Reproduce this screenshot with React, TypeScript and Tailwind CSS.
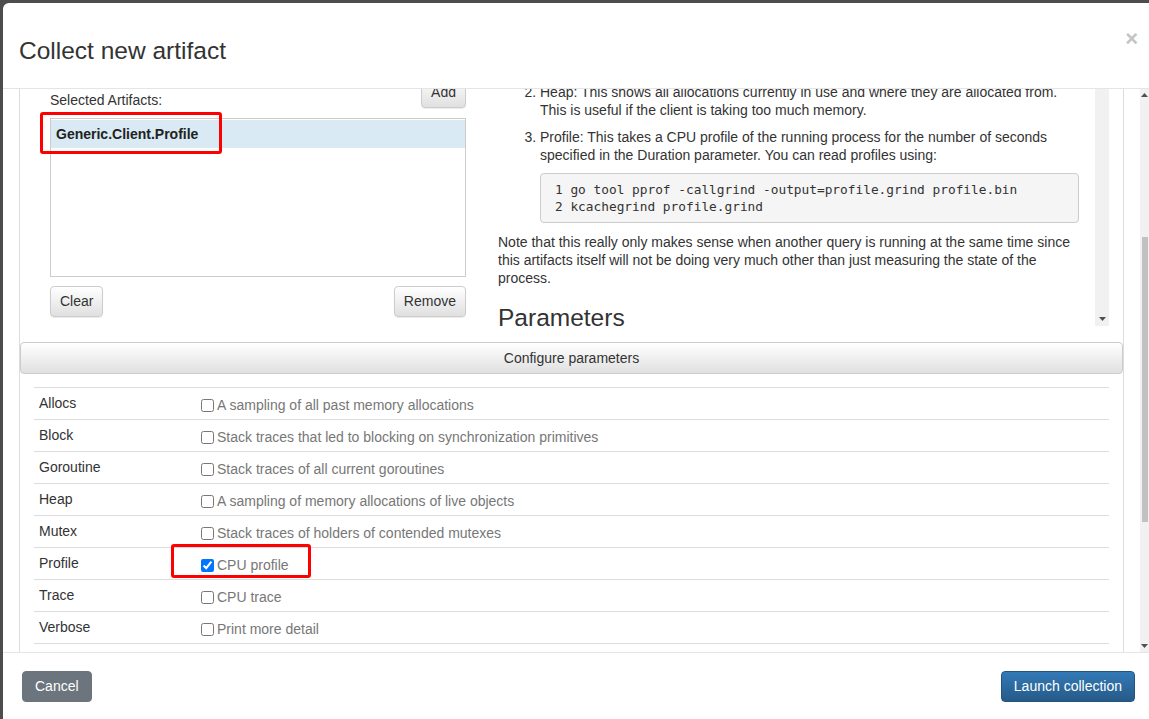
import React from "react";

type Param = { name: string; desc: string; checked?: boolean };

const params: Param[] = [
  { name: "Allocs", desc: "A sampling of all past memory allocations" },
  { name: "Block", desc: "Stack traces that led to blocking on synchronization primitives" },
  { name: "Goroutine", desc: "Stack traces of all current goroutines" },
  { name: "Heap", desc: "A sampling of memory allocations of live objects" },
  { name: "Mutex", desc: "Stack traces of holders of contended mutexes" },
  { name: "Profile", desc: "CPU profile", checked: true },
  { name: "Trace", desc: "CPU trace" },
  { name: "Verbose", desc: "Print more detail" },
];

const Arrow = ({ up }: { up?: boolean }) => (
  <svg width="7" height="4" viewBox="0 0 7 4">
    <polygon points={up ? "0,4 7,4 3.5,0" : "0,0 7,0 3.5,4"} fill="#505050" />
  </svg>
);

const GreyButton = ({ label }: { label: string }) => (
  <button className="h-[31px] px-[9px] text-[14px] text-[#333] border border-[#ccc] rounded-[4px] bg-linear-to-b from-white to-[#e0e0e0] shadow-[0_1px_1px_rgba(0,0,0,0.075)]">
    {label}
  </button>
);

const Description: React.FC = () => (
  <div className="flex-1 overflow-hidden pt-[13px] pr-[15px] leading-[18px]">
    <ol start={2} className="list-decimal pl-[42px]">
      <li>
        Heap: This shows all allocations currently in use and where they are allocated from.
        This is useful if the client is taking too much memory.
      </li>
      <li className="mt-[9px]">
        Profile: This takes a CPU profile of the running process for the number of seconds
        specified in the Duration parameter. You can read profiles using:
        <div className="mt-[9px] mr-[1px] border border-[#ccc] rounded-[4px] bg-[#f5f5f5] py-[7px] pl-[14px] font-['DejaVu_Sans_Mono',monospace] text-[12.8px] leading-[17px] text-[#333] whitespace-pre">
          <div>1 go tool pprof -callgrind -output=profile.grind profile.bin</div>
          <div>2 kcachegrind profile.grind</div>
        </div>
      </li>
    </ol>
    <p className="mt-[10px]">
      Note that this really only makes sense when another query is running at the same time since
      this artifacts itself will not be doing very much other than just measuring the state of the
      process.
    </p>
    <h3 className="mt-[18px] text-[24.5px] leading-[26px] text-[#333]">Parameters</h3>
  </div>
);

export default function App() {
  return (
    <div className="relative w-[1149px] h-[719px] overflow-hidden bg-[#4d4d4d] pt-[3px] pl-[3px] font-['Liberation_Sans',Arial,sans-serif] text-[14px] text-[#333]">
      <div className="flex flex-col w-[1146px] h-[716px] bg-white rounded-tl-[6px]">
        {/* header */}
        <div className="flex justify-between h-[86px] border-b border-[#e5e5e5] shrink-0">
          <h4 className="pl-[16px] pt-[34px] text-[24.5px] leading-[28px] text-[#333]">
            Collect new artifact
          </h4>
          <span className="mt-[25px] mr-[11px] text-[22px] leading-[22px] font-bold text-[#c4c4c4]">
            ×
          </span>
        </div>

        {/* body */}
        <div className="flex h-[563px] shrink-0 overflow-hidden">
          <div className="flex-1 overflow-hidden">
            <div className="-mt-[19px] ml-[16px] w-[1105px] border-x border-[#ddd] pb-[30px]">
              <div className="flex pl-[30px] pr-[14px]">
                <div className="w-[416px] pt-[7px]">
                  <div className="flex justify-between items-start">
                    <span className="mt-[13px] leading-[20px]">Selected Artifacts:</span>
                    <GreyButton label="Add" />
                  </div>
                  <div className="mt-[8px] h-[159px] border border-[#ccc] pt-[1px]">
                    <div className="h-[28px] bg-[#d9eaf4] pl-[5px] font-bold leading-[28px] text-[#222]">
                      Generic.Client.Profile
                    </div>
                  </div>
                  <div className="flex justify-between mt-[9px]">
                    <GreyButton label="Clear" />
                    <GreyButton label="Remove" />
                  </div>
                </div>
                <div className="ml-[32px] w-[611px] h-[256px] flex">
                  <Description />
                  <div className="w-[14px] bg-[#f1f1f1] flex flex-col justify-end items-center pb-[5px]">
                    <Arrow />
                  </div>
                </div>
              </div>

              <div className="mt-[16px] h-[32px] border border-[#ccc] rounded-[4px] bg-linear-to-b from-white to-[#e0e0e0] flex items-center justify-center">
                Configure parameters
              </div>

              <div className="mt-[13px] mx-[14px] border-b border-[#ddd]">
                {params.map((p) => (
                  <div key={p.name} className="flex h-[32px] border-t border-[#ddd]">
                    <div className="w-[163px] pl-[5px] pt-[5px] leading-[20px]">{p.name}</div>
                    <label className="flex items-center pl-[4px] pt-[3px] text-[#777]">
                      <input
                        type="checkbox"
                        defaultChecked={p.checked}
                        className="w-[13px] h-[13px] m-0 mr-[3px]"
                      />
                      {p.desc}
                    </label>
                  </div>
                ))}
              </div>
            </div>
          </div>
          <div className="w-[9px] bg-[#f1f1f1] flex flex-col">
            <div className="h-[12px] flex items-center justify-center">
              <Arrow up />
            </div>
            <div className="h-[136px]" />
            <div className="h-[285px] w-[6px] ml-[2px] bg-[#c1c1c1]" />
            <div className="flex-1" />
            <div className="h-[12px] flex items-center justify-center">
              <Arrow />
            </div>
          </div>
        </div>

        {/* footer */}
        <div className="flex-1 flex justify-between items-start pt-[18px] pl-[19px] pr-[14px] border-t border-[#e5e5e5]">
          <button className="h-[31px] px-[12px] rounded-[4px] bg-[#6c757d] border border-[#6c757d] text-white text-[14px]">
            Cancel
          </button>
          <button className="h-[31px] px-[12px] rounded-[4px] border border-[#245580] bg-linear-to-b from-[#337ab7] to-[#265a88] text-white text-[14px]">
            Launch collection
          </button>
        </div>
      </div>

      {/* annotation boxes */}
      <div className="absolute left-[40px] top-[112px] w-[182px] h-[42px] border-[3px] border-[#ff0000] rounded-[3px]" />
      <div className="absolute left-[171px] top-[544px] w-[140px] h-[34px] border-[3px] border-[#ff0000] rounded-[3px]" />
    </div>
  );
}
